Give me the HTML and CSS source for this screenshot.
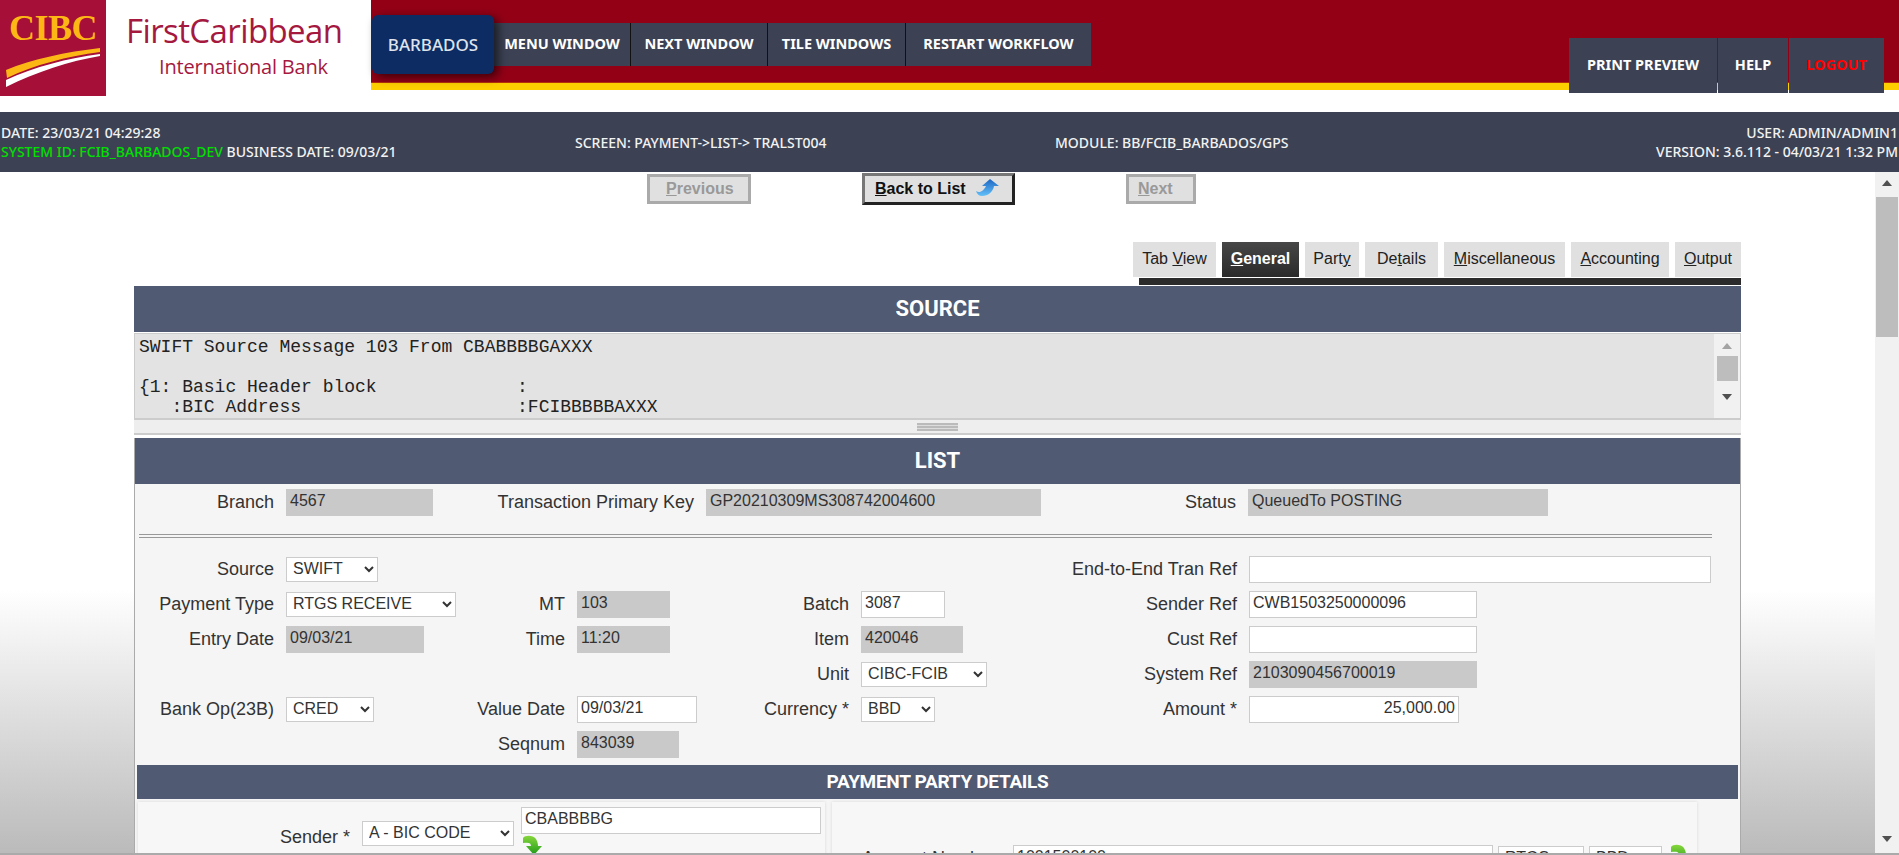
FILE: index.html
```html
<!DOCTYPE html>
<html lang="en">
<head>
<meta charset="utf-8">
<title>Payment List</title>
<link rel="stylesheet" href="styles.css">
</head>
<body>
<header class="top">
  <div class="logo">
    <svg class="logo-mark" viewBox="0 0 106 96" width="106" height="96" aria-label="CIBC">
      <rect width="106" height="96" fill="#a50f38"/>
      <text x="53" y="40" text-anchor="middle" class="logo-cibc">CIBC</text>
      <path d="M6 70 C32 59 66 52 100 48 L100 52 C68 56 34 65 7 78 Z" fill="#fdb714"/>
      <path d="M6 80 C34 67 68 58 100 54 L100 56 C70 61 36 72 6 87 Z" fill="#fff"/>
    </svg>
    <div class="logo-text">
      <div class="logo-name">FirstCaribbean</div>
      <div class="logo-sub">International Bank</div>
    </div>
  </div>
  <div class="band">
    <div class="region">BARBADOS</div>
    <nav class="menu">
      <a class="menu-item m1">MENU WINDOW</a>
      <a class="menu-item m2">NEXT WINDOW</a>
      <a class="menu-item m3">TILE WINDOWS</a>
      <a class="menu-item m4">RESTART WORKFLOW</a>
    </nav>
    <nav class="tools">
      <a class="tool t1">PRINT PREVIEW</a>
      <a class="tool t2">HELP</a>
      <a class="tool t3 logout">LOGOUT</a>
    </nav>
  </div>
</header>

<section class="status">
  <div class="st-a">DATE: 23/03/21 04:29:28<br><span class="green">SYSTEM ID: FCIB_BARBADOS_DEV</span> BUSINESS DATE: 09/03/21</div>
  <div class="st-b">SCREEN: PAYMENT-&gt;LIST-&gt; TRALST004</div>
  <div class="st-c">MODULE: BB/FCIB_BARBADOS/GPS</div>
  <div class="st-d">USER: ADMIN/ADMIN1<br>VERSION: 3.6.112 - 04/03/21 1:32 PM</div>
</section>

<div class="viewport">
  <main class="main">
    <div class="pager">
      <button class="pg pg-prev" disabled><u>P</u>revious</button>
      <button class="pg pg-back"><span><u>B</u>ack to List</span>
        <svg class="ico-back" viewBox="0 0 24 17" width="24" height="17">
          <defs><linearGradient id="gb" x1="0" y1="0" x2="0" y2="1"><stop offset="0" stop-color="#1c66c4"/><stop offset="1" stop-color="#63c0f7"/></linearGradient></defs>
          <path d="M0 12 C4 15 8 11 10 7 H6 L14 0 L23 7 H18 C17 13 12 17 6 17 C3 17 1 15 0 12Z" fill="url(#gb)"/>
        </svg>
      </button>
      <button class="pg pg-next" disabled><u>N</u>ext</button>
    </div>

    <div class="content">
      <div class="tabs">
        <a class="tab tw1">Tab <u>V</u>iew</a>
        <a class="tab tab-on tw2"><u>G</u>eneral</a>
        <a class="tab tw3">Part<u>y</u></a>
        <a class="tab tw4">De<u>t</u>ails</a>
        <a class="tab tw5"><u>M</u>iscellaneous</a>
        <a class="tab tw6"><u>A</u>ccounting</a>
        <a class="tab tw7"><u>O</u>utput</a>
      </div>
      <div class="tabline"></div>

      <h2 class="bar bar-big">SOURCE</h2>
      <div class="source">
        <pre class="source-text">SWIFT Source Message 103 From CBABBBBGAXXX

{1: Basic Header block             :
   :BIC Address                    :FCIBBBBBAXXX</pre>
        <div class="mini-sb">
          <span class="arr-up light"></span>
          <span class="mini-thumb"></span>
          <span class="arr-down"></span>
        </div>
      </div>
      <div class="splitter"><span class="grip"></span></div>

      <div class="panel">
        <h2 class="bar bar-big bar-list">LIST</h2>
        <div class="keys">
          <label class="lab">Branch</label><input class="fld ro w147" readonly value="4567">
          <label class="lab">Transaction Primary Key</label><input class="fld ro w335" readonly value="GP20210309MS308742004600">
          <label class="lab">Status</label><input class="fld ro w300" readonly value="QueuedTo POSTING">
        </div>
        <div class="rule"></div>
        <div class="form">
          <label class="lab r1 c1">Source</label>
          <div class="r1 c2"><select class="sel w92"><option>SWIFT</option></select></div>
          <label class="lab r1 c7">End-to-End Tran Ref</label>
          <input class="fld w462 r1 c8">

          <label class="lab r2 c1">Payment Type</label>
          <div class="r2 c2"><select class="sel w170"><option>RTGS RECEIVE</option></select></div>
          <label class="lab r2 c3">MT</label>
          <input class="fld ro w93 r2 c4" readonly value="103">
          <label class="lab r2 c5">Batch</label>
          <input class="fld w84 r2 c6" value="3087">
          <label class="lab r2 c7">Sender Ref</label>
          <input class="fld w228 r2 c8" value="CWB1503250000096">

          <label class="lab r3 c1">Entry Date</label>
          <input class="fld ro w138 r3 c2" readonly value="09/03/21">
          <label class="lab r3 c3">Time</label>
          <input class="fld ro w93 r3 c4" readonly value="11:20">
          <label class="lab r3 c5">Item</label>
          <input class="fld ro w102 r3 c6" readonly value="420046">
          <label class="lab r3 c7">Cust Ref</label>
          <input class="fld w228 r3 c8">

          <label class="lab r4 c5">Unit</label>
          <div class="r4 c6"><select class="sel w126"><option>CIBC-FCIB</option></select></div>
          <label class="lab r4 c7">System Ref</label>
          <input class="fld ro w228 r4 c8" readonly value="2103090456700019">

          <label class="lab r5 c1">Bank Op(23B)</label>
          <div class="r5 c2"><select class="sel w88"><option>CRED</option></select></div>
          <label class="lab r5 c3">Value Date</label>
          <input class="fld w120 r5 c4" value="09/03/21">
          <label class="lab r5 c5">Currency *</label>
          <div class="r5 c6"><select class="sel w74"><option>BBD</option></select></div>
          <label class="lab r5 c7">Amount *</label>
          <input class="fld w210 num r5 c8" value="25,000.00">

          <label class="lab r6 c3">Seqnum</label>
          <input class="fld ro w102 r6 c4" readonly value="843039">
        </div>

        <h3 class="bar bar-small">PAYMENT PARTY DETAILS</h3>
        <div class="party">
          <div class="pbox pbox-l">
            <label class="lab plab">Sender *</label>
            <select class="sel w152"><option>A - BIC CODE</option></select>
            <div class="pcol">
              <input class="fld w300" value="CBABBBBG">
              <svg class="ico-go" viewBox="0 0 20 20" width="20" height="20">
                <defs><linearGradient id="gg" x1="0" y1="0" x2="0" y2="1"><stop offset="0" stop-color="#86d63c"/><stop offset="1" stop-color="#1f9a18"/></linearGradient></defs>
                <path d="M0 3 C2 0 10 0 13 4 C14 6 15 8 15 11 H19 L11 20 L3 11 H8 C8 8 6 7 0 8 Z" fill="url(#gg)"/>
              </svg>
            </div>
          </div>
          <div class="pbox pbox-r">
            <label class="lab plab2">Account Number</label>
            <input class="fld w480" value="1001500100">
            <select class="sel w86"><option>RTGS</option></select>
            <select class="sel w73"><option>BBD</option></select>
            <svg class="ico-go2" viewBox="0 0 20 20" width="20" height="20">
              <path d="M0 3 C2 0 10 0 13 4 C14 6 15 8 15 11 H19 L11 20 L3 11 H8 C8 8 6 7 0 8 Z" fill="url(#gg)"/>
            </svg>
          </div>
        </div>
      </div>
    </div>
  </main>
  <aside class="page-sb">
    <span class="arr-up"></span>
    <span class="page-thumb"></span>
    <span class="sb-fill"></span>
    <span class="arr-down"></span>
  </aside>
</div>
</body>
</html>
```

FILE: styles.css
```css
* { box-sizing: border-box; }
html, body { margin: 0; height: 100%; overflow: hidden; }
body {
  height: 855px;
  display: flex;
  flex-direction: column;
  font-family: "Liberation Sans", Arial, sans-serif;
  background: linear-gradient(to bottom, #fff 0, #fff 590px, #bababa 855px);
  border-bottom: 2px solid #aaa;
}

/* header */
.top { display: flex; align-items: flex-start; height: 112px; flex: none; background: #fff; }
.logo { width: 371px; height: 96px; display: flex; flex: none; overflow: hidden; }
.logo-mark { flex: none; display: block; }
.logo-cibc { font: 700 36px "Liberation Serif", serif; fill: #fdb714; letter-spacing: -0.5px; }
.logo-text { padding: 12px 0 0 20px; color: #a6193f; white-space: nowrap; font-family: "Open Sans", sans-serif; }
.logo-name { font-size: 33px; line-height: 38px; letter-spacing: -0.6px; }
.logo-sub { font-size: 20px; line-height: 28px; padding-left: 33px; margin-top: 3px; letter-spacing: -0.2px; }

.band {
  flex: 1;
  height: 90px;
  display: flex;
  align-items: flex-start;
  background: #930016;
  border-bottom: 7px solid #fdcf00;
  box-shadow: inset 0 -1px 0 #b5300a;
}
.region {
  width: 122px;
  height: 59px;
  margin-top: 15px;
  margin-left: 1px;
  background: #0d2c63;
  color: #dfe3ec;
  border-radius: 6px;
  font: 500 17px/59px "Noto Sans", sans-serif;
  text-align: center;
  box-shadow: 4px 3px 10px rgba(0,0,0,.6);
  position: relative;
}
.menu { display: flex; margin-top: 23px; height: 43px; background: #3c4254; }
.menu-item {
  height: 43px;
  color: #fff;
  font: 700 14.5px/40px "Noto Sans", sans-serif;
  text-align: center;
  border-right: 1px solid #111;
  white-space: nowrap;
}
.menu-item:last-child { border-right: 0; }
.m1 { width: 137px; }
.m2 { width: 137px; }
.m3 { width: 138px; }
.m4 { width: 185px; }

.tools { display: flex; margin-left: auto; margin-right: 15px; margin-top: 38px; height: 55px; gap: 1px; }
.tool {
  height: 55px;
  background: #3c4254;
  color: #fff;
  font: 700 14.5px/53px "Noto Sans", sans-serif;
  text-align: center;
  white-space: nowrap;
}
.t1 { width: 148px; }
.t2 { width: 70px; }
.t3 { width: 95px; }
.logout { color: #f00; }

/* status */
.status {
  height: 60px;
  flex: none;
  display: flex;
  align-items: center;
  background: #3c4254;
  color: #f2f2f2;
  font: 500 14px/19px "Noto Sans", sans-serif;
  white-space: nowrap;
}
.st-a { width: 575px; padding-left: 1px; }
.st-b { width: 480px; }
.st-c { flex: 1; }
.st-d { text-align: right; padding-right: 1px; }
.green { color: #00e000; }

/* viewport */
.viewport { flex: 1; display: flex; min-height: 0; }
.main { flex: 1; min-width: 0; overflow: hidden; height: 681px; }
.pager { display: flex; align-items: flex-start; gap: 111px; padding: 1px 0 0 647px; height: 70px; }
.pg {
  font: 700 16px "Liberation Sans", sans-serif;
  height: 30px;
  padding: 0;
  background: #e0e0e0;
  border: 3px solid #aaa;
  color: #999;
  margin-top: 1px;
}
.pg u { text-decoration: underline; }
.pg-prev { width: 104px; padding-left: 16px; text-align: left; }
.pg-next { width: 70px; padding-left: 9px; text-align: left; }
.pg-back {
  width: 153px;
  height: 32px;
  margin-top: 0;
  color: #111;
  display: flex;
  align-items: center;
  padding-left: 10px;
  border-color: #777 #222 #222 #777;
}
.ico-back { margin-left: 10px; margin-top: -3px; }

.content { margin-left: 134px; width: 1607px; }
.tabs { display: flex; justify-content: flex-end; gap: 6px; height: 35px; }
.tab {
  height: 35px;
  background: #e0e0e0;
  color: #222;
  font-size: 16px;
  line-height: 34px;
  text-align: center;
  white-space: nowrap;
}
.tab-on { background: linear-gradient(#474747, #2a2a2a); color: #fff; font-weight: 700; }
.tw1 { width: 83px; }
.tw2 { width: 77px; }
.tw3 { width: 54px; }
.tw4 { width: 73px; margin-right: -6px; margin-left: 0; }
.tw5 { width: 121px; margin-left: 6px; }
.tw6 { width: 98px; }
.tw7 { width: 66px; }
.tabline { height: 7px; width: 602px; margin: 1px 0 1px auto; background: #2b2b2b; }

.bar { margin: 0; background: #505a72; color: #fff; text-align: center; font-family: Roboto, sans-serif; font-weight: 700; }
.bar-big { height: 46px; font-size: 22px; line-height: 46px; }
.bar-small { height: 34px; margin: 2px 2px 0; font-size: 19px; line-height: 34px; letter-spacing: -0.3px; }

.source {
  height: 87px;
  margin-top: 1px;
  display: flex;
  background: #e3e3e3;
  border: solid #ccc;
  border-width: 1px 1px 2px;
  overflow: hidden;
}
.source-text {
  flex: 1;
  margin: 0;
  padding: 3px 0 0 4px;
  font: 18px/20px "Liberation Mono", monospace;
  color: #222;
  overflow: hidden;
}
.mini-sb {
  width: 26px;
  background: #f1f1f1;
  display: flex;
  flex-direction: column;
  align-items: center;
  padding: 9px 0 0;
}
.mini-thumb { width: 21px; height: 25px; background: #bdbdbd; margin: 7px 0 13px; }
.arr-up, .arr-down { width: 0; height: 0; border-left: 5px solid transparent; border-right: 5px solid transparent; flex: none; }
.arr-up { border-bottom: 6px solid #505050; }
.arr-up.light { border-bottom-color: #a3a3a3; }
.arr-down { border-top: 6px solid #505050; }

.splitter {
  height: 15px;
  background: #eee;
  border-bottom: 2px solid #ccc;
  display: flex;
  justify-content: center;
  align-items: center;
}
.grip { width: 41px; height: 8px; background: repeating-linear-gradient(#bbb 0, #bbb 2px, #ddd 2px, #ddd 3px); }

.panel {
  margin-top: 3px;
  background: #f5f5f5;
  border: solid #aaa;
  border-width: 0 1px;
  height: 420px;
  overflow: hidden;
}
.bar-list { margin: 0 -1px; }
.keys {
  display: grid;
  grid-template-columns: 151px 176px 244px 335px 207px 300px;
  padding-top: 5px;
  height: 50px;
  align-items: start;
}
.lab {
  display: block;
  text-align: right;
  padding-right: 12px;
  font-size: 18px;
  line-height: 27px;
  color: #333;
  white-space: nowrap;
}
.fld {
  height: 27px;
  border: 1px solid #ccc;
  background: #fff;
  color: #333;
  font: 16px "Liberation Sans", sans-serif;
  padding: 0 3px 4px;
  margin: 0;
  outline: 0;
  display: block;
}
.ro { background: #c9c9c9; border-color: #c9c9c9; }
.num { text-align: right; }
.sel {
  height: 25px;
  border: 1px solid #ccc;
  background: #fff;
  color: #333;
  font: 16px "Liberation Sans", sans-serif;
  padding: 0 0 3px 2px;
  display: block;
}
.rule { height: 4px; margin: 0 28px 0 4px; border: solid #999; border-width: 1px 0; }
.form {
  display: grid;
  grid-template-columns: 151px 173px 118px 144px 140px 140px 248px 464px;
  grid-template-rows: repeat(6, 35px);
  padding-top: 18px;
  height: 225px;
  align-items: start;
}
.form .sel { margin-top: 1px; }
.r1 { grid-row: 1; } .r2 { grid-row: 2; } .r3 { grid-row: 3; }
.r4 { grid-row: 4; } .r5 { grid-row: 5; } .r6 { grid-row: 6; }
.c1 { grid-column: 1; } .c2 { grid-column: 2; } .c3 { grid-column: 3; } .c4 { grid-column: 4; }
.c5 { grid-column: 5; } .c6 { grid-column: 6; } .c7 { grid-column: 7; } .c8 { grid-column: 8; }
.w73 { width: 73px; } .w74 { width: 74px; } .w84 { width: 84px; } .w86 { width: 86px; }
.w88 { width: 88px; } .w92 { width: 92px; } .w93 { width: 93px; } .w102 { width: 102px; }
.w120 { width: 120px; } .w126 { width: 126px; } .w138 { width: 138px; } .w147 { width: 147px; }
.w152 { width: 152px; } .w170 { width: 170px; } .w210 { width: 210px; } .w228 { width: 228px; }
.w300 { width: 300px; } .w335 { width: 335px; } .w462 { width: 462px; } .w480 { width: 480px; }

.party { display: flex; gap: 7px; padding: 3px 0 0 3px; }
.pbox { background: #f7f7f7; box-shadow: 0 0 3px rgba(0,0,0,.12); height: 120px; display: flex; align-items: flex-start; }
.pbox-l { width: 687px; padding: 5px 0 0 0; }
.pbox-r { width: 865px; padding-top: 43px; gap: 5px; }
.plab { width: 224px; margin-top: 17px; }
.pbox-l .sel { margin-top: 14px; }
.pcol { margin-left: 7px; }
.ico-go { display: block; margin: 1px 0 0 2px; }
.plab2 { width: 176px; margin-right: 0; }
.pbox-r .sel { margin-top: 1px; }
.ico-go2 { margin: -1px 0 0 4px; }

/* page scrollbar */
.page-sb {
  width: 24px;
  flex: none;
  height: 681px;
  background: #f1f1f1;
  display: flex;
  flex-direction: column;
  align-items: center;
  padding: 8px 0 11px;
}
.page-thumb { width: 22px; height: 140px; background: #bdbdbd; margin-top: 11px; }
.sb-fill { flex: 1; }
```
